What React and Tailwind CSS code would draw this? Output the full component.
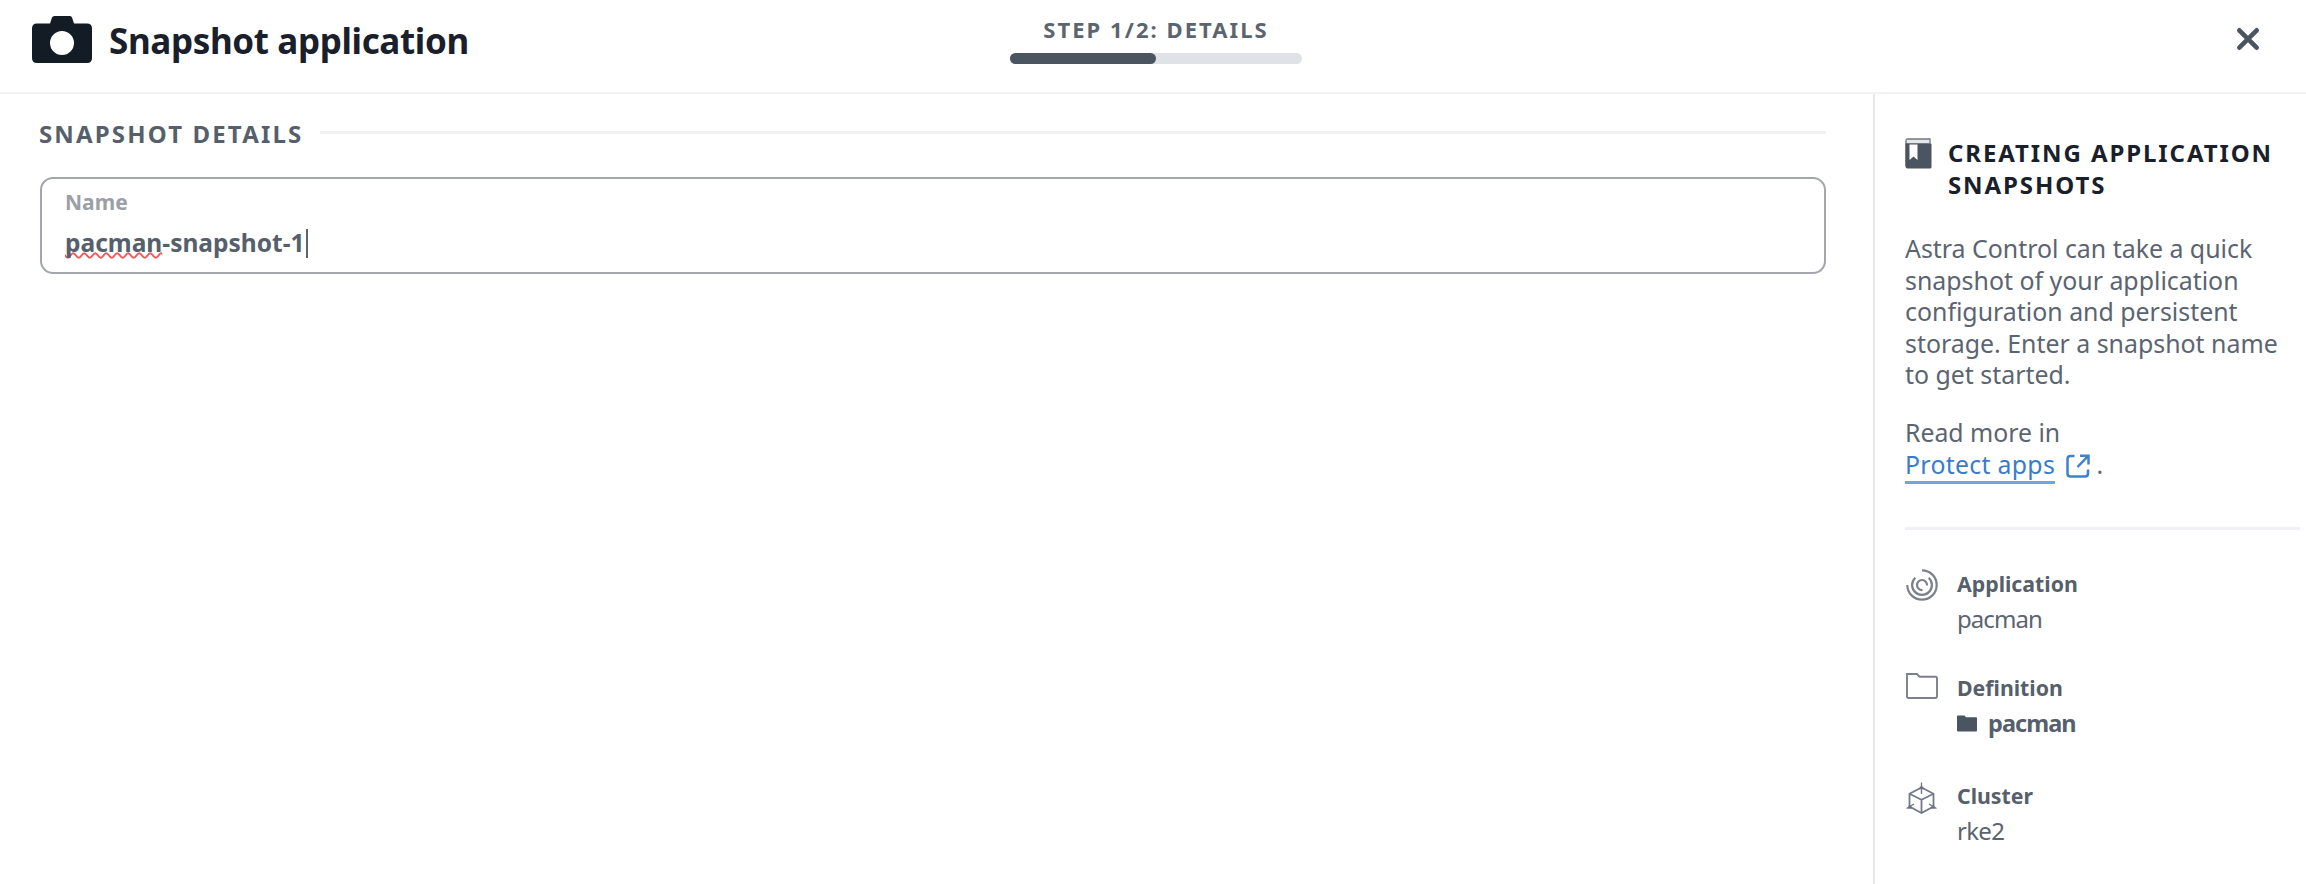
function CameraIcon() {
  return (
    <svg className="block h-[48px] w-[60px] shrink-0" viewBox="0 0 60 48" fill="#131b24">
      <path
        fillRule="evenodd"
        d="M22.500 0h15.500q1.500 0 2 1.500l2 6H55q5 0 5 5V42q0 5-5 5H5q-5 0-5-5V12.500q0-5 5-5h13l2-6Q20.500 0 22.500 0ZM30 15a12 12 0 1 0 0 24a12 12 0 1 0 0-24Z"
      />
    </svg>
  );
}

function CloseIcon() {
  return (
    <svg className="block size-[24px]" viewBox="0 0 24 24" stroke="#4b5461" strokeWidth="4.600" strokeLinecap="round">
      <path d="M3.300 3.300L20.700 20.700M20.700 3.300L3.300 20.700" />
    </svg>
  );
}

function BookIcon() {
  return (
    <svg className="mt-[2px] block h-[31px] w-[27px] shrink-0" viewBox="0 0 27 31">
      <path d="M1 28V2.500Q1 1 2.500 1H25V5" fill="#e6e7eb" stroke="#6f7683" strokeWidth="1.300" />
      <path d="M.5 5.200H25.500Q26.500 5.200 26.500 6.500V29Q26.500 30.500 25 30.500H2.500Q.5 30.500 .5 28.500Z" fill="#4b5461" />
      <path d="M4.500 6.500h8V22l-4-3.500l-4 3.500Z" fill="#fff" />
    </svg>
  );
}

function ExternalIcon() {
  return (
    <svg className="ml-[11px] inline-block size-[24px] align-[-4px]" viewBox="0 0 24 24" fill="none" stroke="#3f80cf" strokeWidth="2.500">
      <path d="M8.500 2H4.500Q1.500 2 1.500 5V19.500Q1.500 22.500 4.500 22.500H19Q22 22.500 22 19.500V15.500" />
      <path d="M14 1.700H22.500V10.500M22 2.200L11.500 13" />
    </svg>
  );
}

function AppIcon() {
  return (
    <svg className="block size-[32px]" viewBox="0 0 32 32" fill="none" stroke="#7a818d" strokeWidth="2.200">
      <path d="M1.300 16A14.700 14.700 0 1 0 16 1.300" />
      <path d="M9.300 8.700A9.900 9.900 0 1 0 22.700 8.700" />
      <path d="M16.500 21A5 5 0 1 1 21 16.500" />
    </svg>
  );
}

function FolderOutlineIcon() {
  return (
    <svg className="block h-[26px] w-[32px]" viewBox="0 0 32 26" fill="none" stroke="#7a818d" strokeWidth="1.900">
      <path d="M1 23.500V1H11L13.500 3.700H29.500Q31 3.700 31 5.500V23Q31 25 29.200 25H2.500Q1 25 1 23.500Z" />
    </svg>
  );
}

function FolderSolidIcon() {
  return (
    <svg className="block h-[17px] w-[20px]" viewBox="0 0 20 17" fill="#4b5461">
      <path d="M0 1.500Q0 .5 1 .5H7.500L9 2.300H19Q20 2.300 20 3.300V15.500Q20 16.500 19 16.500H1Q0 16.500 0 15.500Z" />
    </svg>
  );
}

function ClusterIcon() {
  return (
    <svg className="block size-[32px]" viewBox="0 0 32 32" fill="none" stroke="#737a87" strokeWidth="1.800">
      <path d="M15.500 5.500L27.500 11.700V24.500L15.500 31L3.500 24.500V11.700Z" />
      <path d="M3.500 11.700L15.500 17.700L27.500 11.700M15.500 17.700V31" />
      <path d="M15.500 .5V12M.5 26.500L8 22M30.500 26.500L23 22" strokeWidth="1.400" />
      <path d="M12.800 7L15.500 3.500L18.200 7ZM2 26.500L3.500 22.500L6.500 26.500ZM29 26.500L27.500 22.500L24.500 26.500Z" fill="#68707d" strokeWidth=".5" />
    </svg>
  );
}

function SummaryItem({ icon, iconClass, label, children }) {
  return (
    <div className="flex h-[72px]">
      <div className={"w-[52px] shrink-0 pl-px " + iconClass}>{icon}</div>
      <div className="whitespace-nowrap">
        <div className="text-[21.300px] leading-[36px] font-bold text-[#565f6c]">{label}</div>
        {children}
      </div>
    </div>
  );
}

export default function App() {
  return (
    <div className="flex h-[884px] w-[2306px] flex-col overflow-hidden bg-white font-['Noto_Sans',sans-serif] text-[#5b6471]">
      <header className="grid h-[94px] shrink-0 grid-cols-[1fr_292px_1fr] border-b-2 border-[#f1f1f6] pl-[32px]">
        <div className="flex items-start">
          <div className="pt-[16px]"><CameraIcon /></div>
          <h1 className="ml-[17px] mt-[17px] text-[35px] leading-[48px] font-bold tracking-[-0.360px] whitespace-nowrap text-[#19202b]">
            Snapshot application
          </h1>
        </div>
        <div className="-ml-[13px] mr-[13px] pt-[14px]">
          <div className="text-center text-[22px] leading-[31px] font-bold tracking-[2.050px] whitespace-nowrap text-[#5b6471]">
            STEP 1/2: DETAILS
          </div>
          <div className="mt-[8px] h-[11px] w-[292px] rounded-full bg-[#dfe2e7]">
            <div className="h-full w-1/2 rounded-full bg-[#4b5461]" />
          </div>
        </div>
        <button className="mt-[27px] mr-[46px] size-[24px] justify-self-end"><CloseIcon /></button>
      </header>

      <div className="flex flex-1">
        <main className="flex-1 pt-[24px] pr-[47px] pl-[39px]">
          <div className="flex items-center">
            <h2 className="w-[281px] text-[24px] leading-[32px] font-bold tracking-[2.150px] whitespace-nowrap text-[#565f6c]">
              SNAPSHOT DETAILS
            </h2>
            <div className="-mt-[3px] h-[3px] flex-1 bg-[#f0f0f5]" />
          </div>
          <div className="mt-[27px] ml-px flex h-[97px] flex-col rounded-[13px] border-[2px] border-[#a3a7ad] pl-[23px]">
            <label className="mt-[7px] text-[21px] leading-[32px] font-bold text-[#9b9fa7]">Name</label>
            <div className="mt-[8px] flex items-center text-[24.500px] leading-[34px] font-bold text-[#565f6c]">
              <span className="underline decoration-[#ee5a5a] decoration-wavy decoration-[1.500px] underline-offset-[0px] [text-decoration-skip-ink:none]">pacman</span>
              <span>-snapshot-1</span>
              <span className="ml-px h-[29px] w-[2px] bg-[#5b6471]" />
            </div>
          </div>
        </main>

        <aside className="w-[433px] shrink-0 border-l-2 border-[#e4e8ed] pt-[42px] pl-[30px]">
          <div className="flex">
            <BookIcon />
            <h3 className="ml-[16px] pt-px text-[24px] leading-[32px] font-bold tracking-[1.900px] whitespace-nowrap text-[#19202b]">
              CREATING APPLICATION
              <br />
              SNAPSHOTS
            </h3>
          </div>
          <p className="mt-[32px] text-[24.900px] leading-[31.600px] whitespace-nowrap">
            Astra Control can take a quick
            <br />
            snapshot of your application
            <br />
            configuration and persistent
            <br />
            storage. Enter a snapshot name
            <br />
            to get started.
          </p>
          <p className="mt-[25px] h-[66px] text-[24.800px] leading-[32.500px] whitespace-nowrap">
            Read more in
            <br />
            <a className="inline-block h-[36px] border-b-3 border-[#6ea4e2] tracking-[0.320px] text-[#397ccc]">Protect apps</a>
            <ExternalIcon /> <span>.</span>
          </p>
          <div className="mt-[45px] mr-[6px] h-[3px] bg-[#f0f0f5]" />
          <div className="pt-[36px]">
            <SummaryItem icon={<AppIcon />} iconClass="pt-[3px]" label="Application">
              <div className="-mt-px text-[24px] leading-[36px] tracking-[-0.950px]">pacman</div>
            </SummaryItem>
            <div className="h-[32px]" />
            <SummaryItem icon={<FolderOutlineIcon />} iconClass="pt-[3px]" label="Definition">
              <div className="flex items-center text-[23.500px] leading-[35px] font-bold tracking-[-0.950px] text-[#565f6c]">
                <FolderSolidIcon />
                <span className="ml-[11px]">pacman</span>
              </div>
            </SummaryItem>
            <div className="h-[36px]" />
            <SummaryItem icon={<ClusterIcon />} iconClass="pt-[4px]" label="Cluster">
              <div className="-mt-px text-[24px] leading-[36px] tracking-[-0.700px]">rke2</div>
            </SummaryItem>
          </div>
        </aside>
      </div>
    </div>
  );
}
